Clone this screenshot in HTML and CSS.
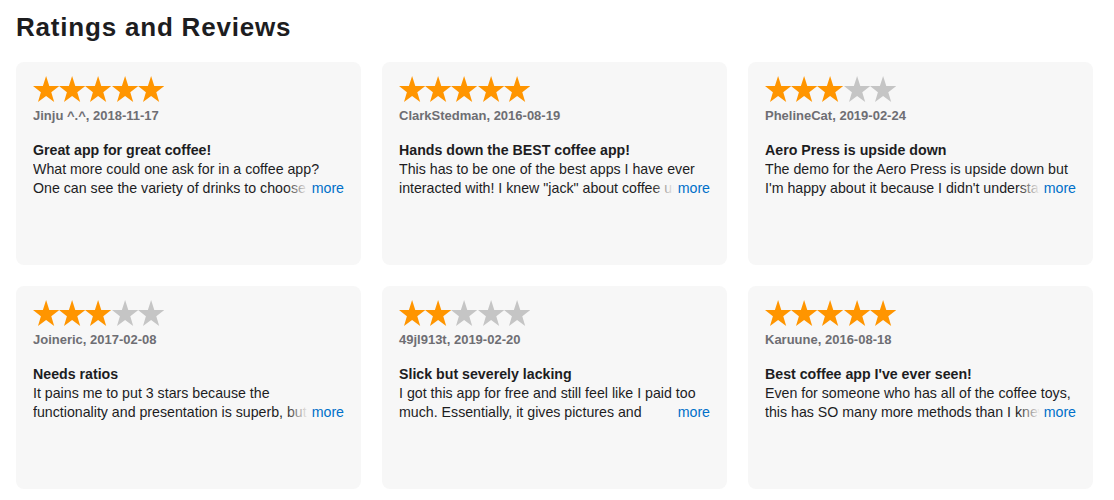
FILE: index.html
```html
<!DOCTYPE html>
<html lang="en">
<head>
    <meta charset="utf-8" />
    <title>Ratings and Reviews</title>
    <meta name="viewport" content="width=device-width, initial-scale=1" />
    <link rel="stylesheet" href="styles.css">
</head>
<body>
<svg width="0" height="0" class="defs">
    <defs>
        <polygon id="star" points="13.1,0 16.3,9.9 26.2,10 18.3,16.2 21.2,26 13.1,20.1 5,26 7.9,16.2 0,10 9.9,9.9" />
    </defs>
</svg>
<div class="content">
    <h1>Ratings and Reviews</h1>

    <div class="reviews">
        <div class="review">
            <div class="stars">
                <svg viewBox="0 0 26.2 26" class="on"><use href="#star"/></svg><svg viewBox="0 0 26.2 26" class="on"><use href="#star"/></svg><svg viewBox="0 0 26.2 26" class="on"><use href="#star"/></svg><svg viewBox="0 0 26.2 26" class="on"><use href="#star"/></svg><svg viewBox="0 0 26.2 26" class="on"><use href="#star"/></svg>
            </div>
            <div class="author">Jinju ^.^, 2018-11-17</div>
            <h3>Great app for great coffee!</h3>
            <div class="body">
                <p>What more could one ask for in a coffee app? One can see the variety of drinks to choose from and how to make them.</p>
                <a href="#" class="more">more</a>
            </div>
        </div>

        <div class="review">
            <div class="stars">
                <svg viewBox="0 0 26.2 26" class="on"><use href="#star"/></svg><svg viewBox="0 0 26.2 26" class="on"><use href="#star"/></svg><svg viewBox="0 0 26.2 26" class="on"><use href="#star"/></svg><svg viewBox="0 0 26.2 26" class="on"><use href="#star"/></svg><svg viewBox="0 0 26.2 26" class="on"><use href="#star"/></svg>
            </div>
            <div class="author">ClarkStedman, 2016-08-19</div>
            <h3>Hands down the BEST coffee app!</h3>
            <div class="body">
                <p>This has to be one of the best apps I have ever interacted with! I knew "jack" about coffee until I downloaded it.</p>
                <a href="#" class="more">more</a>
            </div>
        </div>

        <div class="review">
            <div class="stars">
                <svg viewBox="0 0 26.2 26" class="on"><use href="#star"/></svg><svg viewBox="0 0 26.2 26" class="on"><use href="#star"/></svg><svg viewBox="0 0 26.2 26" class="on"><use href="#star"/></svg><svg viewBox="0 0 26.2 26"><use href="#star"/></svg><svg viewBox="0 0 26.2 26"><use href="#star"/></svg>
            </div>
            <div class="author">PhelineCat, 2019-02-24</div>
            <h3>Aero Press is upside down</h3>
            <div class="body">
                <p>The demo for the Aero Press is upside down but I'm happy about it because I didn't understand how it worked before.</p>
                <a href="#" class="more">more</a>
            </div>
        </div>

        <div class="review">
            <div class="stars">
                <svg viewBox="0 0 26.2 26" class="on"><use href="#star"/></svg><svg viewBox="0 0 26.2 26" class="on"><use href="#star"/></svg><svg viewBox="0 0 26.2 26" class="on"><use href="#star"/></svg><svg viewBox="0 0 26.2 26"><use href="#star"/></svg><svg viewBox="0 0 26.2 26"><use href="#star"/></svg>
            </div>
            <div class="author">Joineric, 2017-02-08</div>
            <h3>Needs ratios</h3>
            <div class="body">
                <p>It pains me to put 3 stars because the functionality and presentation is superb, but there are no ratios.</p>
                <a href="#" class="more">more</a>
            </div>
        </div>

        <div class="review">
            <div class="stars">
                <svg viewBox="0 0 26.2 26" class="on"><use href="#star"/></svg><svg viewBox="0 0 26.2 26" class="on"><use href="#star"/></svg><svg viewBox="0 0 26.2 26"><use href="#star"/></svg><svg viewBox="0 0 26.2 26"><use href="#star"/></svg><svg viewBox="0 0 26.2 26"><use href="#star"/></svg>
            </div>
            <div class="author">49jl913t, 2019-02-20</div>
            <h3>Slick but severely lacking</h3>
            <div class="body">
                <p>I got this app for free and still feel like I paid too much. Essentially, it gives pictures and <br>descriptions of drinks.</p>
                <a href="#" class="more">more</a>
            </div>
        </div>

        <div class="review">
            <div class="stars">
                <svg viewBox="0 0 26.2 26" class="on"><use href="#star"/></svg><svg viewBox="0 0 26.2 26" class="on"><use href="#star"/></svg><svg viewBox="0 0 26.2 26" class="on"><use href="#star"/></svg><svg viewBox="0 0 26.2 26" class="on"><use href="#star"/></svg><svg viewBox="0 0 26.2 26" class="on"><use href="#star"/></svg>
            </div>
            <div class="author">Karuune, 2016-08-18</div>
            <h3>Best coffee app I've ever seen!</h3>
            <div class="body">
                <p>Even for someone who has all of the coffee toys, this has SO many more methods than I knew existed.</p>
                <a href="#" class="more">more</a>
            </div>
        </div>
    </div>
</div>
</body>
</html>
```

FILE: styles.css
```css
body {
    margin: 0; padding: 0;
    background-color: #fff; color: #1d1d1f;
    font: 14.2px "Liberation Sans", Arial, Helvetica, sans-serif;
}
svg.defs { position: absolute; }
div.content { padding: 10px 21px 12px 16px; }
h1 {
    margin: 0 0 18px; font-size: 26px; line-height: 34px;
    font-weight: bold; letter-spacing: 0.8px; color: #1d1d1f;
}
.reviews {
    display: grid; grid-template-columns: repeat(3, 345px);
    gap: 21px;
}
.review {
    background-color: #f7f7f7; border-radius: 8px;
    height: 203px; box-sizing: border-box;
    padding: 14px 17px 0 17px;
}
.stars { display: flex; height: 26px; }
.stars svg { width: 26.2px; height: 26px; fill: #c5c5c5; }
.stars svg.on { fill: #ff9500; }
.author {
    margin-top: 6px; font-size: 13px; line-height: 16px;
    font-weight: bold; color: #6e6e73;
}
h3 {
    margin: 17px 0 0; font-size: 14.2px; line-height: 19px;
    font-weight: bold; color: #1d1d1f;
}
.body { position: relative; }
.body p {
    margin: 0; line-height: 19px; height: 38px; overflow: hidden;
    color: #1d1d1f;
}
a.more {
    position: absolute; right: 0; bottom: 0;
    padding-left: 26px; line-height: 19px; color: #0070c9;
    text-decoration: none;
    background: linear-gradient(to right, rgba(247,247,247,0), #f7f7f7 22px);
}
```
